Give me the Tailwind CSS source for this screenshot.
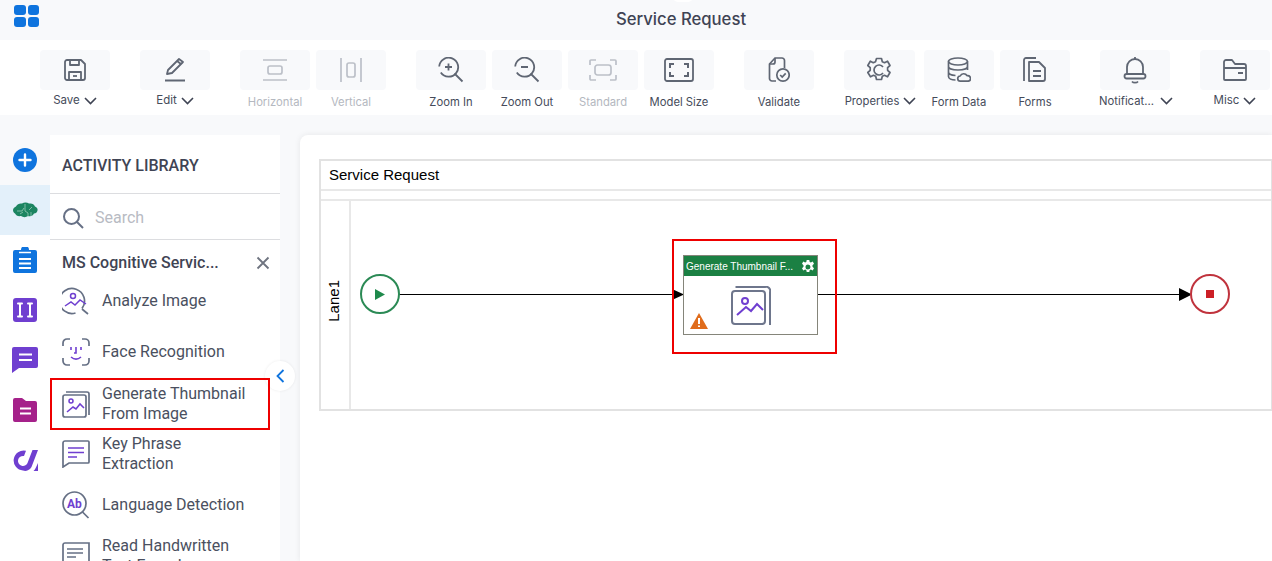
<!DOCTYPE html>
<html lang="en">
<head>
<meta charset="utf-8"/>
<title>Service Request</title>
<script src="https://cdn.jsdelivr.net/npm/@tailwindcss/browser@4"></script>
</head>
<body class="bg-[#f8f9fb] font-['Roboto',sans-serif] text-[#3f4454] h-[561px] w-[1272px] overflow-hidden">

<!-- top bar -->
<header class="relative h-10 flex items-center justify-center">
  <div class="absolute left-[14px] top-[5px] grid grid-cols-2 gap-[2px]">
    <span class="w-[11.5px] h-[10px] rounded-[3px] bg-[#0f74de]"></span>
    <span class="w-[11.5px] h-[10px] rounded-[3px] bg-[#0f74de]"></span>
    <span class="w-[11.5px] h-[10px] rounded-[3px] bg-[#0f74de]"></span>
    <span class="w-[11.5px] h-[10px] rounded-[3px] bg-[#0f74de]"></span>
  </div>
  <span class="absolute left-[673px] top-[-8px] w-5 h-[10px] rounded-full bg-white"></span>
  <h1 class="text-[16.7px] font-medium font-['Inter',sans-serif] text-[#3f4454] ml-[90px]">Service Request</h1>
</header>

<!-- toolbar -->
<nav class="h-[75px] bg-white pl-10 pt-[10px] flex text-[11.25px] font-['Inter',sans-serif] text-[#454b5a]">
  <div class="w-[70px] flex flex-col items-center">
    <div class="w-[70px] h-10 rounded bg-[#f8f9fb] flex items-center justify-center">
      <svg width="24" height="24" viewBox="0 0 24 24" fill="none" stroke="#5f6673" stroke-width="1.8" stroke-linejoin="round"><path d="M2 4a2 2 0 0 1 2-2h14l4 4v14a2 2 0 0 1-2 2H4a2 2 0 0 1-2-2z"/><path d="M7 2v5h9V2M6 22v-8h12v8"/><path d="M10 18h4"/></svg>
    </div>
    <div class="h-[22px] flex items-center gap-[4px] text-[11.5px]">Save <svg width="13" height="8" viewBox="0 0 13 8" fill="none" stroke="#3f4454" stroke-width="1.6"><path d="M1 1l5.5 5.5L12 1"/></svg></div>
  </div>
  <div class="w-[70px] ml-[30px] flex flex-col items-center">
    <div class="w-[70px] h-10 rounded bg-[#f8f9fb] flex items-center justify-center">
      <svg width="24" height="26" viewBox="0 0 24 26" fill="none" stroke="#5f6673" stroke-width="1.8" stroke-linejoin="round"><path d="M4 17l1-4L16 2l4 3L9 16z"/><path d="M14 4l4 3"/><path d="M2 23.5h20" stroke-width="2"/></svg>
    </div>
    <div class="h-[22px] flex items-center gap-[4px] text-[11.5px]">Edit <svg width="13" height="8" viewBox="0 0 13 8" fill="none" stroke="#3f4454" stroke-width="1.6"><path d="M1 1l5.5 5.5L12 1"/></svg></div>
  </div>
  <div class="w-[70px] ml-[30px] flex flex-col items-center text-[#b4b8c0]">
    <div class="w-[70px] h-10 rounded bg-[#f8f9fb] flex items-center justify-center">
      <svg width="26" height="22" viewBox="0 0 26 22" fill="none" stroke="#bcc0c8" stroke-width="1.7"><path d="M1 1h24M1 21h24"/><rect x="6" y="7" width="14" height="8" rx="2"/></svg>
    </div>
    <div class="h-[22px] mt-[1px] flex items-center">Horizontal</div>
  </div>
  <div class="w-[70px] ml-[6px] flex flex-col items-center text-[#b4b8c0]">
    <div class="w-[70px] h-10 rounded bg-[#f8f9fb] flex items-center justify-center">
      <svg width="22" height="24" viewBox="0 0 22 24" fill="none" stroke="#bcc0c8" stroke-width="1.7"><path d="M1 0v24M21 0v24"/><rect x="7" y="5" width="8" height="14" rx="2"/></svg>
    </div>
    <div class="h-[22px] mt-[1px] flex items-center">Vertical</div>
  </div>
  <div class="w-[70px] ml-[30px] flex flex-col items-center">
    <div class="w-[70px] h-10 rounded bg-[#f8f9fb] flex items-center justify-center">
      <svg width="26" height="26" viewBox="0 0 26 26" fill="none" stroke="#5f6673" stroke-width="1.8"><path d="M2.8 15.5A9.5 9.5 0 1 0 1.200 9.500"/><path d="M10.500 6.500v7M7 10h7M16.500 16.500l8 8"/></svg>
    </div>
    <div class="h-[22px] mt-[1px] flex items-center">Zoom In</div>
  </div>
  <div class="w-[70px] ml-[6px] flex flex-col items-center">
    <div class="w-[70px] h-10 rounded bg-[#f8f9fb] flex items-center justify-center">
      <svg width="26" height="26" viewBox="0 0 26 26" fill="none" stroke="#5f6673" stroke-width="1.8"><path d="M2.800 15.500A9.500 9.500 0 1 0 1.200 9.500"/><path d="M7 10h7M16.500 16.500l8 8"/></svg>
    </div>
    <div class="h-[22px] mt-[1px] flex items-center">Zoom Out</div>
  </div>
  <div class="w-[70px] ml-[6px] flex flex-col items-center text-[#b4b8c0]">
    <div class="w-[70px] h-10 rounded bg-[#f8f9fb] flex items-center justify-center">
      <svg width="28" height="22" viewBox="0 0 28 22" fill="none" stroke="#bcc0c8" stroke-width="1.7"><path d="M1 6V2a1 1 0 0 1 1-1h5M21 1h5a1 1 0 0 1 1 1v4M27 16v4a1 1 0 0 1-1 1h-5M7 21H2a1 1 0 0 1-1-1v-4"/><rect x="6" y="6" width="16" height="10" rx="2.5"/></svg>
    </div>
    <div class="h-[22px] mt-[1px] flex items-center">Standard</div>
  </div>
  <div class="w-[70px] ml-[6px] flex flex-col items-center">
    <div class="w-[70px] h-10 rounded bg-[#f8f9fb] flex items-center justify-center">
      <svg width="30" height="24" viewBox="0 0 30 24" fill="none" stroke="#5f6673" stroke-width="1.8"><rect x="1" y="1" width="28" height="22" rx="2"/><path d="M6 10V6h4M20 6h4v4M24 14v4h-4M10 18H6v-4" stroke-width="2"/></svg>
    </div>
    <div class="h-[22px] mt-[1px] flex items-center">Model Size</div>
  </div>
  <div class="w-[70px] ml-[30px] flex flex-col items-center">
    <div class="w-[70px] h-10 rounded bg-[#f8f9fb] flex items-center justify-center">
      <svg width="22" height="26" viewBox="0 0 22 26" fill="none" stroke="#5f6673" stroke-width="1.7"><path d="M8 24H4a2.500 2.500 0 0 1-2.500-2.500V7L7 1h7a2.500 2.500 0 0 1 2.500 2.500V11"/><path d="M7 1v4a2 2 0 0 1-2 2H1.500"/><circle cx="15" cy="18" r="6.200"/><path d="M12.200 18l2 2 3.500-3.700"/></svg>
    </div>
    <div class="h-[22px] mt-[1px] flex items-center">Validate</div>
  </div>
  <div class="w-[70px] ml-[30px] flex flex-col items-center">
    <div class="w-[71px] h-10 rounded bg-[#f8f9fb] flex items-center justify-center">
      <svg width="26" height="26" viewBox="0 0 26 26" fill="none" stroke="#5f6673" stroke-width="1.7" stroke-linejoin="round"><path d="M10.500 1.500h5l.8 3.200 2.200 1 3-1.500 2.500 4.300-2.400 2.200v2.600l2.400 2.200-2.500 4.300-3-1.500-2.200 1-.8 3.200h-5l-.8-3.200-2.200-1-3 1.500L1.800 15.500l2.400-2.200v-2.600L1.800 8.500l2.500-4.300 3 1.500 2.200-1z"/><path d="M17 10a5 5 0 1 0 0 6"/></svg>
    </div>
    <div class="h-[22px] ml-[3px] flex items-center gap-[4px] whitespace-nowrap">Properties <svg width="13" height="8" viewBox="0 0 13 8" fill="none" stroke="#3f4454" stroke-width="1.6"><path d="M1 1l5.500 5.500L12 1"/></svg></div>
  </div>
  <div class="w-[70px] ml-[10px] flex flex-col items-center">
    <div class="w-[70px] h-10 rounded bg-[#f8f9fb] flex items-center justify-center">
      <svg width="24" height="26" viewBox="0 0 24 26" fill="none" stroke="#5f6673" stroke-width="1.7"><ellipse cx="11" cy="4.500" rx="9.500" ry="3.500"/><path d="M1.500 4.500v15c0 2 3 3.500 7 3.500M20.500 4.500V13M1.500 9.500c0 2 4 3.500 9.500 3.500s9.500-1.500 9.500-3.500M1.500 15c0 2 3 3.300 7 3.500"/><path d="M13.500 24.200a2.600 2.600 0 0 1 -.3-5.200 3.800 3.800 0 0 1 6.800-.3 2.800 2.800 0 0 1 1.300 5.500z" stroke-linejoin="round"/></svg>
    </div>
    <div class="h-[22px] mt-[1px] flex items-center">Form Data</div>
  </div>
  <div class="w-[70px] ml-[6px] flex flex-col items-center">
    <div class="w-[70px] h-10 rounded bg-[#f8f9fb] flex items-center justify-center">
      <svg width="24" height="26" viewBox="0 0 24 26" fill="none" stroke="#5f6673" stroke-width="1.8"><path d="M13 1H3a2 2 0 0 0-2 2v21"/><path d="M6 5h10l6 6v11a2 2 0 0 1-2 2H6z" stroke-linejoin="round"/><path d="M10 14h8M10 19h8"/></svg>
    </div>
    <div class="h-[22px] mt-[1px] flex items-center">Forms</div>
  </div>
  <div class="w-[70px] ml-[30px] flex flex-col items-center">
    <div class="w-[70px] h-10 rounded bg-[#f8f9fb] flex items-center justify-center">
      <svg width="24" height="28" viewBox="0 0 24 28" fill="none" stroke="#5f6673" stroke-width="1.8" stroke-linejoin="round"><path d="M12 1v2.500"/><path d="M4 18v-7a8 8 0 0 1 16 0v7"/><rect x="1.500" y="18" width="21" height="4.500" rx="2.200"/><path d="M9 25.500a3.500 2.500 0 0 0 6 0"/></svg>
    </div>
    <div class="h-[22px] ml-[2px] flex items-center gap-[6px] whitespace-nowrap"><span>Notificat...</span><svg width="13" height="8" viewBox="0 0 13 8" fill="none" stroke="#3f4454" stroke-width="1.6"><path d="M1 1l5.500 5.500L12 1"/></svg></div>
  </div>
  <div class="w-[70px] ml-[30px] flex flex-col items-center">
    <div class="w-[70px] h-10 rounded bg-[#f8f9fb] flex items-center justify-center">
      <svg width="24" height="22" viewBox="0 0 24 22" fill="none" stroke="#5f6673" stroke-width="1.8" stroke-linejoin="round"><path d="M1 20V3a2 2 0 0 1 2-2h6l3 4h9a2 2 0 0 1 2 2v13a1 1 0 0 1-1 1H2a1 1 0 0 1-1-1z"/><path d="M1 9h22M15 14h5"/></svg>
    </div>
    <div class="h-[22px] flex items-center gap-[4px] text-[11.5px]">Misc <svg width="13" height="8" viewBox="0 0 13 8" fill="none" stroke="#3f4454" stroke-width="1.6"><path d="M1 1l5.500 5.500L12 1"/></svg></div>
  </div>
</nav>

<main class="relative flex pt-5 h-[446px]">
  <!-- icon rail -->
  <aside class="w-[50px] shrink-0 flex flex-col">
    <div class="h-[50px] flex items-center justify-center">
      <svg width="24" height="24" viewBox="0 0 24 24"><circle cx="12" cy="12" r="12" fill="#0f74de"/><path d="M12 6.500v11M6.500 12h11" stroke="#fff" stroke-width="2.400" stroke-linecap="round"/></svg>
    </div>
    <div class="h-[50px] bg-[#e3f0fa] flex items-center justify-center">
      <svg width="26" height="16" viewBox="0 0 26 16"><path d="M1 8c0-2 2-3 3-3.500C5 2 8 1 10 1.500 12 0 15 0 17 1.500c3-.5 5 .5 6 3 2 1 3 2 2.500 4-.5 2-1.500 3-3.500 3-1 2-3 3.500-6 2.500-2 1.500-5 1.500-7 0-3 .5-5-.5-6-2.500C2 11 1 10 1 8z" fill="#1c8561"/><path d="M5 9h5l2-3M13 2v7l3 2v4M20 5l-3 3M8 12l3-2M19 10v4" stroke="#a8d4c2" stroke-width=".7" fill="none"/></svg>
    </div>
    <div class="bg-white flex-1 flex flex-col items-center">
      <div class="h-[50px] flex items-center justify-center">
        <svg width="24" height="26" viewBox="0 0 24 26"><path d="M2 3h6a4 4 0 0 1 8 0h6a2 2 0 0 1 2 2v19a2 2 0 0 1-2 2H2a2 2 0 0 1-2-2V5a2 2 0 0 1 2-2z" fill="#0f74de"/><path d="M6 5.500h12" stroke="#fff" stroke-width="1.500"/><path d="M6 12h12M6 16.500h12M6 21h12" stroke="#fff" stroke-width="2"/></svg>
      </div>
      <div class="h-[50px] flex items-center justify-center">
        <svg width="24" height="24" viewBox="0 0 24 24"><rect width="24" height="24" rx="3" fill="#6f3fd0"/><path d="M5 5.500h4M7 5.500v13M5 18.500h4M15 5.500h4M17 5.500v13M15 18.500h4" stroke="#fff" stroke-width="2" stroke-linecap="round"/></svg>
      </div>
      <div class="h-[50px] flex items-center justify-center">
        <svg width="26" height="26" viewBox="0 0 26 26"><path d="M2 0h22a2 2 0 0 1 2 2v17a2 2 0 0 1-2 2H7l-7 5V2a2 2 0 0 1 2-2z" fill="#6f3fd0"/><path d="M7 7.500h13M7 13h13" stroke="#fff" stroke-width="2.200"/></svg>
      </div>
      <div class="h-[50px] flex items-center justify-center">
        <svg width="24" height="24" viewBox="0 0 24 24"><path d="M2 0h7l4 3h9a2 2 0 0 1 2 2v17a2 2 0 0 1-2 2H2a2 2 0 0 1-2-2V2a2 2 0 0 1 2-2z" fill="#a5218a"/><path d="M7 10.500h11M7 15.500h11" stroke="#fff" stroke-width="2.200"/></svg>
      </div>
      <div class="h-[50px] flex items-center justify-center">
        <svg width="25" height="21" viewBox="0 0 25 21"><path d="M25 0L18.500 17a7 7 0 0 1-8.500 3.500A10 10 0 1 1 13 .8L11 6a5 5 0 1 0 2.500 8.500 4 4 0 0 0 1-1.500L19.500 0z" fill="#6f3fd0"/><path d="M25 13v8h-4.500c1-1 1.800-2 2.300-3.300z" fill="#6f3fd0"/></svg>
      </div>
    </div>
  </aside>

  <!-- activity library -->
  <section class="w-[230px] shrink-0 bg-white text-[#4a5060] overflow-hidden">
    <div class="h-[59px] border-b border-[#dcdde0] pl-3 pt-[21px] text-base font-medium leading-5 text-[#3f4454]">ACTIVITY LIBRARY</div>
    <div class="h-[46px] border-b border-[#dcdde0] pl-3 pt-[3px] flex items-center gap-[11px]">
      <svg width="22" height="22" viewBox="0 0 22 22" fill="none" stroke="#667085" stroke-width="2"><circle cx="9.500" cy="9.500" r="7.500"/><path d="M15 15l6 6"/></svg>
      <span class="text-base text-[#b8bbc3]">Search</span>
    </div>
    <div class="h-[35px] pl-3 pr-[10px] pt-[10px] flex items-center justify-between">
      <span class="text-base font-medium text-[#3f4454]">MS Cognitive Servic...</span>
      <svg width="14" height="14" viewBox="0 0 14 14" stroke="#6f7480" stroke-width="1.800"><path d="M1.500 1.500l11 11M12.500 1.500l-11 11"/></svg>
    </div>
    <ul class="text-base leading-5">
      <li class="h-[51px] pl-3 flex items-center gap-3">
        <svg width="28" height="28" viewBox="0 0 28 28" fill="none" stroke="#667085" stroke-width="1.700"><path d="M20 21.500A12.500 12.500 0 1 0 13.500 26"/><path d="M20 22l6 5"/><circle cx="11" cy="9" r="2.500" stroke="#6f3fd0" stroke-width="1.500"/><path d="M3 19l6-4 4 3 5-5 6 4" stroke="#6f3fd0" stroke-width="1.500"/></svg>
        <span class="w-[160px]">Analyze Image</span>
      </li>
      <li class="h-[51px] pl-3 flex items-center gap-3">
        <svg width="28" height="28" viewBox="0 0 28 28" fill="none" stroke="#667085" stroke-width="1.700"><path d="M1 8V5a4 4 0 0 1 4-4h3M20 1h3a4 4 0 0 1 4 4v3M27 20v3a4 4 0 0 1-4 4h-3M8 27H5a4 4 0 0 1-4-4v-3"/><path d="M9 9v3M19 9v3M14 9v6h-2M9 19c3 2.500 7 2.500 10 0" stroke="#6f3fd0" stroke-width="1.600"/></svg>
        <span class="w-[160px]">Face Recognition</span>
      </li>
      <li class="relative z-10 h-[52px] w-[220px] mt-[1px] pl-[10px] flex items-center gap-3 border-2 border-[#ee0000]">
        <svg width="28" height="28" viewBox="0 0 28 28" fill="none" stroke="#667085" stroke-width="1.700"><path d="M4 2h21a2 2 0 0 1 2 2v21"/><rect x="1" y="5" width="23" height="22" rx="2"/><circle cx="9" cy="11" r="2" stroke="#6f3fd0" stroke-width="1.500"/><path d="M5 22l6-5 3 2 4-5 4 4" stroke="#6f3fd0" stroke-width="1.600"/></svg>
        <span class="w-[160px]">Generate Thumbnail From Image</span>
      </li>
      <li class="h-[51px] -mt-[2px] pl-3 flex items-center gap-3">
        <svg width="28" height="28" viewBox="0 0 28 28" fill="none" stroke="#667085" stroke-width="1.700"><path d="M3 1h23a1 1 0 0 1 1 1v20a1 1 0 0 1-1 1H7l-6 4V3a2 2 0 0 1 2-2z"/><path d="M6 8h16M6 12.500h16M6 17h9" stroke="#6f3fd0" stroke-width="1.600"/></svg>
        <span class="w-[160px]">Key Phrase<br/>Extraction</span>
      </li>
      <li class="h-[51px] pl-3 flex items-center gap-3">
        <svg width="28" height="28" viewBox="0 0 28 28" fill="none" stroke="#667085" stroke-width="1.700"><circle cx="12.500" cy="12.500" r="11.500"/><path d="M20.500 21l6 6"/><text x="5" y="17" font-size="12" font-weight="700" fill="#6f3fd0" stroke="none" font-family="Roboto">Ab</text></svg>
        <span class="w-[160px]">Language Detection</span>
      </li>
      <li class="h-[51px] pl-3 flex items-center gap-3">
        <svg width="28" height="28" viewBox="0 0 28 28" fill="none" stroke="#667085" stroke-width="1.700"><path d="M3 1h24v27M1 28V3a2 2 0 0 1 2-2"/><path d="M5 7h16M5 11h16M5 15h9" stroke-width="1.400"/><path d="M15 20h12M21 20v8" stroke="#6f3fd0" stroke-width="2.200"/></svg>
        <span class="w-[160px]">Read Handwritten Text From Image</span>
      </li>
    </ul>
  </section>

  <!-- collapse handle -->
  <button class="absolute left-[265px] top-[246px] w-[30px] h-[30px] rounded-full bg-white flex items-center justify-center shadow-[0_0_3px_rgba(0,0,0,0.08)]">
    <svg width="9" height="14" viewBox="0 0 9 14" fill="none" stroke="#0f74de" stroke-width="1.800"><path d="M7.500 1L1.500 7l6 6"/></svg>
  </button>

  <!-- canvas -->
  <section class="relative ml-5 flex-1 bg-white rounded-tl-lg shadow-[0_0_6px_rgba(0,0,0,0.08)] font-['Liberation_Sans',sans-serif] text-black">
    <div class="absolute left-[19px] top-6 w-[953px] h-[252px] border-2 border-r-0 border-[#e2e2e2] flex flex-col">
      <div class="h-[30px] border-b-2 border-[#e8e8e8] pl-2 text-[15px] leading-[28px]">Service Request</div>
      <div class="h-[10px] border-b-2 border-[#e8e8e8]"></div>
      <div class="flex-1 flex">
        <div class="w-[30px] border-r-2 border-[#e8e8e8] flex items-center justify-center">
          <span class="text-[15px] [writing-mode:vertical-rl] rotate-180 -ml-[2px] -mt-[8px]">Lane1</span>
        </div>
      </div>
    </div>
    <div class="absolute left-[971px] top-[24px] w-[2px] h-[252px] bg-[#e2e2e2]"></div>

    <!-- edges -->
    <svg class="absolute left-0 top-0" width="972" height="300" viewBox="0 0 972 300" fill="none">
      <path d="M98 159.500h274M518 159.500h361" stroke="#000" stroke-width="1.200"/>
      <path d="M372 154l12 5.500-12 5.500z" fill="#000"/>
      <path d="M879 153l13 6.500-13 6.500z" fill="#000"/>
    </svg>

    <!-- start -->
    <div class="absolute left-[60px] top-[139px] w-10 h-10 rounded-full border-2 border-[#2b8a55] bg-white flex items-center justify-center">
      <svg width="10" height="11" viewBox="0 0 10 11"><path d="M0 0l10 5.500L0 11z" fill="#1f8a4c"/></svg>
    </div>

    <!-- end -->
    <div class="absolute left-[890px] top-[139px] w-10 h-10 rounded-full border-[2.5px] border-[#c0333d] bg-white flex items-center justify-center">
      <span class="w-2 h-2 bg-[#cc1f26]"></span>
    </div>

    <!-- activity -->
    <div class="absolute left-[372px] top-[104px] w-[165px] h-[115px] border-2 border-[#ee0000]"></div>
    <div class="absolute left-[383px] top-[120px] w-[135px] h-[80px] border border-[#85857a] bg-white">
      <div class="h-[20px] bg-[#1b8043] flex items-center justify-between pl-[2px] pr-[2px] text-[10px] pt-[1px] text-white leading-none">
        <span>Generate Thumbnail F...</span>
        <svg width="14" height="14" viewBox="0 0 14 14"><path fill="#fff" fill-rule="evenodd" d="M5.700 0h2.600l.4 2 1.200.6 1.800-1 1.300 2.200-1.500 1.400v1.600l1.500 1.400-1.300 2.200-1.800-1-1.200.6-.4 2H5.700l-.4-2-1.200-.6-1.800 1L1 8.200l1.500-1.400V5.200L1 3.800l1.300-2.200 1.800 1 1.200-.6zM7 4.500a2.500 2.500 0 1 0 0 5 2.500 2.500 0 0 0 0-5z"/></svg>
      </div>
      <svg class="absolute left-[47px] top-[30px]" width="40" height="40" viewBox="0 0 40 40" fill="none" stroke="#6e768c" stroke-width="2"><path d="M4.500 1H34a4 4 0 0 1 5 5v33"/><rect x="1" y="5" width="33" height="33" rx="3"/><circle cx="14" cy="15" r="3" stroke="#6f3fd0"/><path d="M6 29l9-8 5 4 6-7 6 6" stroke="#6f3fd0"/></svg>
      <svg class="absolute left-[6px] top-[57px]" width="18" height="16" viewBox="0 0 18 16"><path d="M9 0l9 16H0z" fill="#e06c1c"/><path d="M9 5v6M9 12.500v1.500" stroke="#fff" stroke-width="2"/></svg>
    </div>
  </section>
</main>
</body>
</html>
